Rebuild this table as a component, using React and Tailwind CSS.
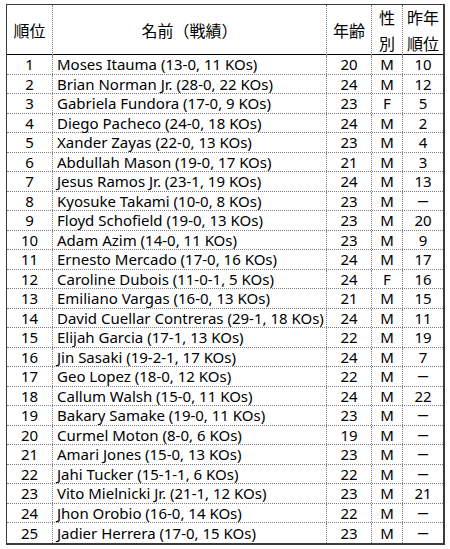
// App.jsx
import React from 'react';

const rows = [
  [1, 'Moses Itauma (13-0, 11 KOs)', 20, 'M', '10'],
  [2, 'Brian Norman Jr. (28-0, 22 KOs)', 24, 'M', '12'],
  [3, 'Gabriela Fundora (17-0, 9 KOs)', 23, 'F', '5'],
  [4, 'Diego Pacheco (24-0, 18 KOs)', 24, 'M', '2'],
  [5, 'Xander Zayas (22-0, 13 KOs)', 23, 'M', '4'],
  [6, 'Abdullah Mason (19-0, 17 KOs)', 21, 'M', '3'],
  [7, 'Jesus Ramos Jr. (23-1, 19 KOs)', 24, 'M', '13'],
  [8, 'Kyosuke Takami (10-0, 8 KOs)', 23, 'M', null],
  [9, 'Floyd Schofield (19-0, 13 KOs)', 23, 'M', '20'],
  [10, 'Adam Azim (14-0, 11 KOs)', 23, 'M', '9'],
  [11, 'Ernesto Mercado (17-0, 16 KOs)', 24, 'M', '17'],
  [12, 'Caroline Dubois (11-0-1, 5 KOs)', 24, 'F', '16'],
  [13, 'Emiliano Vargas (16-0, 13 KOs)', 21, 'M', '15'],
  [14, 'David Cuellar Contreras (29-1, 18 KOs)', 24, 'M', '11'],
  [15, 'Elijah Garcia (17-1, 13 KOs)', 22, 'M', '19'],
  [16, 'Jin Sasaki (19-2-1, 17 KOs)', 24, 'M', '7'],
  [17, 'Geo Lopez (18-0, 12 KOs)', 22, 'M', null],
  [18, 'Callum Walsh (15-0, 11 KOs)', 24, 'M', '22'],
  [19, 'Bakary Samake (19-0, 11 KOs)', 23, 'M', null],
  [20, 'Curmel Moton (8-0, 6 KOs)', 19, 'M', null],
  [21, 'Amari Jones (15-0, 13 KOs)', 23, 'M', null],
  [22, 'Jahi Tucker (15-1-1, 6 KOs)', 22, 'M', null],
  [23, 'Vito Mielnicki Jr. (21-1, 12 KOs)', 23, 'M', '21'],
  [24, 'Jhon Orobio (16-0, 14 KOs)', 22, 'M', null],
  [25, 'Jadier Herrera (17-0, 15 KOs)', 23, 'M', null],
];

const cols = 'grid grid-cols-[46px_274px_45px_31px_40px]';
const dot = 'border-r border-dotted border-[#808080]';

export default function App() {
  return (
    <div className="bg-white min-h-[549px] pt-[4px] pl-[6px] text-black text-[15px] font-['Noto_Sans','Noto_Sans_CJK_JP',sans-serif]">
      <div className="w-[439px] border-l border-t border-r-2 border-b-2 border-[#3a3a3a]">
        {/* header */}
        <div className={`${cols} h-[50px] border-b border-black text-[16px] leading-[26px]`}>
          <div className={`flex items-center justify-center ${dot}`}>順位</div>
          <div className={`flex items-center justify-center ${dot}`}>名前（戦績）</div>
          <div className={`flex items-center justify-center ${dot}`}>年齢</div>
          <div className={`flex flex-col items-center justify-center ${dot}`}>
            <span>性</span>
            <span>別</span>
          </div>
          <div className="flex flex-col items-center justify-center">
            <span>昨年</span>
            <span>順位</span>
          </div>
        </div>

        {/* rows */}
        {rows.map(([rank, name, age, sex, prev], i) => (
          <div
            key={rank}
            className={`${cols} h-[19.5px] leading-[18px] ${i < rows.length - 1 ? 'border-b border-dotted border-[#808080]' : ''}`}
          >
            <div className={`flex items-center justify-center ${dot}`}>{rank}</div>
            <div className={`flex items-center pl-[4px] whitespace-nowrap ${dot}`}>{name}</div>
            <div className={`flex items-center justify-center ${dot}`}>{age}</div>
            <div className={`flex items-center justify-center ${dot}`}>{sex}</div>
            <div className="flex items-center justify-center">
              {prev ?? <span className="text-[11px] font-bold leading-[18px]">—</span>}
            </div>
          </div>
        ))}
      </div>
    </div>
  );
}
